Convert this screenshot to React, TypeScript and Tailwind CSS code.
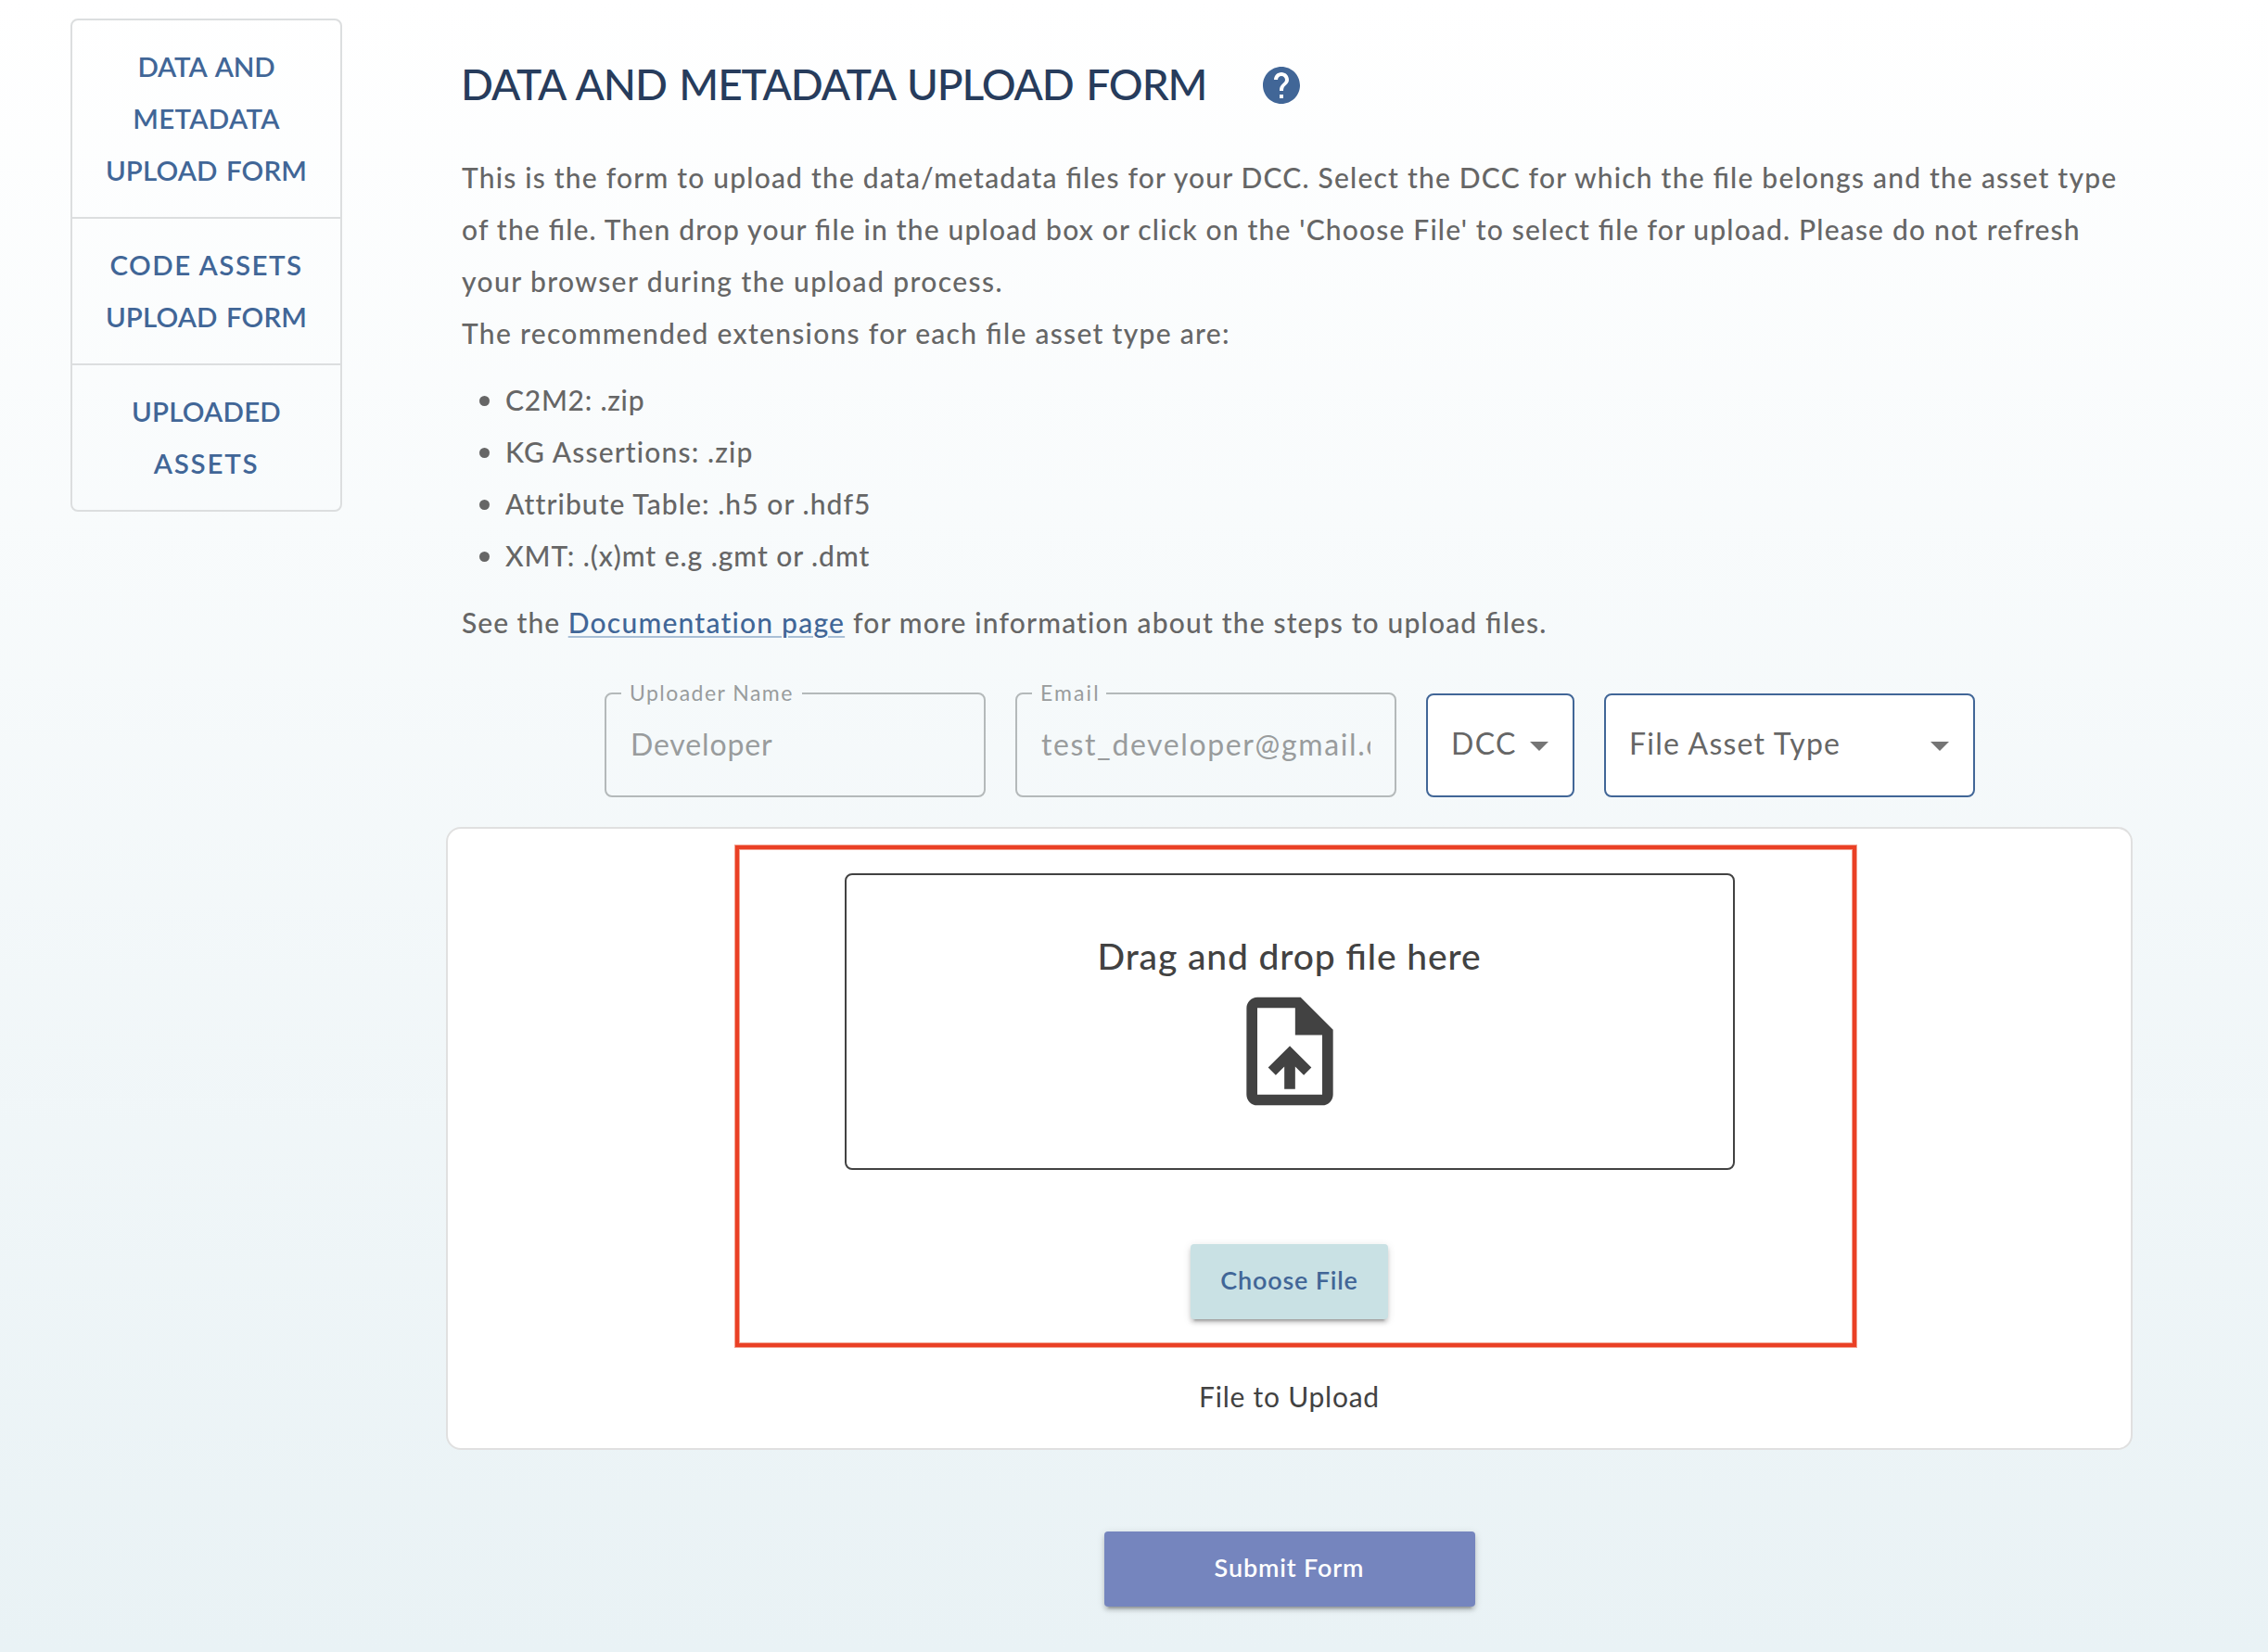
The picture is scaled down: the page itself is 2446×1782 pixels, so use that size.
import React from "react";

const NAV = [
  [
    { text: "DATA AND", spacing: "tracking-[-0.15px] [word-spacing:3px]" },
    { text: "METADATA", spacing: "tracking-[0.31px]" },
    { text: "UPLOAD FORM", spacing: "tracking-[0.1px] [word-spacing:2px]" },
  ],
  [
    { text: "CODE ASSETS", spacing: "tracking-[1.5px]" },
    { text: "UPLOAD FORM", spacing: "tracking-[0.1px] [word-spacing:2px]" },
  ],
  [
    { text: "UPLOADED", spacing: "tracking-[0.19px]" },
    { text: "ASSETS", spacing: "tracking-[1.75px]" },
  ],
];

const INTRO = [
  {
    text: "This is the form to upload the data/metadata files for your DCC. Select the DCC for which the file belongs and the asset type",
    spacing: "tracking-[1.2px]",
  },
  {
    text: "of the file. Then drop your file in the upload box or click on the 'Choose File' to select file for upload. Please do not refresh",
    spacing: "tracking-[1.175px]",
  },
  { text: "your browser during the upload process.", spacing: "tracking-[1.4px]" },
  { text: "The recommended extensions for each file asset type are:", spacing: "tracking-[1.3px]" },
];

const EXTENSIONS = [
  { text: "C2M2: .zip", spacing: "tracking-[0.75px]" },
  { text: "KG Assertions: .zip", spacing: "tracking-[1.15px]" },
  { text: "Attribute Table: .h5 or .hdf5", spacing: "tracking-[1.07px]" },
  { text: "XMT: .(x)mt e.g .gmt or .dmt", spacing: "tracking-[0.95px]" },
];

const BUTTON_SHADOW =
  "shadow-[0_6px_2px_-4px_rgba(0,0,0,0.2),0_4px_4px_0_rgba(0,0,0,0.14),0_2px_10px_0_rgba(0,0,0,0.12)]";

function Sidebar() {
  return (
    <nav className="mt-5 ml-[76px] w-[293px] shrink-0 divide-y-2 divide-[#dcdedf] self-start rounded-lg border-2 border-[#dcdedf] text-center text-[29.5px] leading-[56px] font-semibold text-[#416697]">
      {NAV.map((item, i) => (
        <a key={i} className="block py-[22px]">
          {item.map((line) => (
            <span key={line.text} className={`block whitespace-nowrap ${line.spacing}`}>
              {line.text}
            </span>
          ))}
        </a>
      ))}
    </nav>
  );
}

function HelpIcon() {
  return (
    <svg viewBox="0 0 24 24" className="size-12 fill-[#416697]">
      <path d="M12 2C6.48 2 2 6.48 2 12s4.48 10 10 10 10-4.48 10-10S17.52 2 12 2zm1 17h-2v-2h2v2zm2.07-7.75l-.9.92C13.45 12.9 13 13.5 13 15h-2v-.5c0-1.1.45-2.1 1.17-2.83l1.24-1.26c.37-.36.59-.86.59-1.41 0-1.1-.9-2-2-2s-2 .9-2 2H8c0-2.21 1.79-4 4-4s4 1.79 4 4c0 .88-.36 1.68-.93 2.25z" />
    </svg>
  );
}

function UploadFileIcon() {
  return (
    <svg viewBox="0 0 24 24" className="mt-[3px] size-[140px] fill-[#424242]">
      <path d="M14 2H6c-1.1 0-1.99.9-1.99 2L4 20c0 1.1.89 2 1.99 2H18c1.1 0 2-.9 2-2V8l-6-6zm4 18H6V4h7v5h5v11zM8 15.01l1.41 1.41L11 14.84V19h2v-4.16l1.59 1.59L16 15.01 12.01 11 8 15.01z" />
    </svg>
  );
}

function DropArrow() {
  return (
    <svg viewBox="0 0 24 24" className="size-12 shrink-0 fill-[#757575]">
      <path d="M7 10l5 5 5-5z" />
    </svg>
  );
}

function DisabledField(props: {
  label: string;
  value: string;
  labelClass: string;
  valueClass: string;
}) {
  return (
    <fieldset className="-mt-[14px] h-[126px] w-[411px] min-w-0 shrink-0 rounded-lg border-2 border-[#b4b9ba] text-[#999c9d]">
      <legend className={`ml-4 h-7 pl-[9px] text-[23px] leading-[26px] whitespace-nowrap ${props.labelClass}`}>
        {props.label}
      </legend>
      <div
        className={`mx-[26px] mt-[13px] overflow-hidden text-[32px] leading-[56px] whitespace-nowrap ${props.valueClass}`}
      >
        {props.value}
      </div>
    </fieldset>
  );
}

function Select(props: { label: string; boxClass: string; textClass: string }) {
  return (
    <div
      className={`flex h-28 shrink-0 items-center justify-between rounded-lg border-2 border-[#416697] bg-white pr-3 pl-[25px] text-[32px] text-[#666666] ${props.boxClass}`}
    >
      <span className={`-mt-1 whitespace-nowrap ${props.textClass}`}>{props.label}</span>
      <DropArrow />
    </div>
  );
}

export default function App() {
  return (
    <div className="flex h-[1782px] w-[2446px] overflow-hidden bg-linear-to-b from-white to-[#e9f2f5] font-['Lato',sans-serif] [font-feature-settings:'liga'_1]">
      <Sidebar />
      <main className="ml-28 w-[1819px] pt-16">
        <div className="ml-4 flex h-14 items-center">
          <h1 className="w-[861px] pb-[3px] text-[46px] leading-[53px] font-medium tracking-[-1.1px] whitespace-nowrap text-[#273c5c] [word-spacing:3px]">
            DATA AND METADATA UPLOAD FORM
          </h1>
          <HelpIcon />
        </div>

        <section className="mt-[43px] ml-[17px] text-[30px] leading-[56px] font-medium whitespace-nowrap text-[#666666]">
          {INTRO.map((line) => (
            <p key={line.text} className={line.spacing}>
              {line.text}
            </p>
          ))}
          <ul className="my-4 [font-feature-settings:normal]">
            {EXTENSIONS.map((item) => (
              <li key={item.text} className={`flex items-center ${item.spacing}`}>
                <span className="mt-0.5 mr-[17px] ml-[19px] size-[11px] rounded-full bg-[#666666]" />
                {item.text}
              </li>
            ))}
          </ul>
          <p>
            <span className="tracking-[1px]">See the </span>
            <a className="tracking-[1.22px] text-[#416697] underline decoration-[#a9bfd6] decoration-2 underline-offset-[3px] [font-feature-settings:normal]">
              Documentation page
            </a>
            <span className="tracking-[1.17px] [font-feature-settings:normal]"> for more information about the steps to upload </span>
            <span className="tracking-[1.17px]">files.</span>
          </p>
        </section>

        <div className="mt-[49px] ml-[171px] flex h-28 gap-8">
          <DisabledField
            label="Uploader Name"
            value="Developer"
            labelClass="w-[195px] tracking-[1.45px]"
            valueClass="tracking-[0.85px]"
          />
          <DisabledField
            label="Email"
            value="test_developer@gmail.com"
            labelClass="w-[80px] tracking-[2.08px]"
            valueClass="tracking-[1.62px]"
          />
          <Select label="DCC" boxClass="w-40" textClass="tracking-[1.4px]" />
          <Select label="File Asset Type" boxClass="w-[400px]" textClass="tracking-[1.24px]" />
        </div>

        <section className="relative mt-8 flex h-[672px] flex-col items-center rounded-2xl border-2 border-[#e0e0e0] bg-white pt-12 text-[#424242]">
          <div className="flex h-80 w-[960px] flex-col items-center rounded-lg border-2 border-[#424242] pt-[57px]">
            <p className="text-[39px] leading-[60px] font-medium tracking-[0.88px]">Drag and drop file here</p>
            <UploadFileIcon />
          </div>
          <button
            className={`mt-20 h-[81px] w-[213px] rounded bg-[#c9e1e4] pb-0.5 text-[27px] font-semibold tracking-[0.8px] text-[#416697] ${BUTTON_SHADOW}`}
          >
            Choose File
          </button>
          <p className="mt-[55px] text-[30px] leading-[56px] tracking-[0.75px]">File to Upload</p>
          <div className="pointer-events-none absolute top-[18px] left-[310px] h-[541px] w-[1209px] border-4 border-[#ea4025] shadow-[0_0_0_1px_#f2a08f,inset_0_0_0_1px_#f2a08f]" />
        </section>

        <button
          className={`mx-auto mt-[88px] block h-[81px] w-[400px] rounded bg-[#7585be] pb-0.5 text-[27px] font-semibold tracking-[0.85px] text-white ${BUTTON_SHADOW}`}
        >
          Submit Form
        </button>
      </main>
    </div>
  );
}
